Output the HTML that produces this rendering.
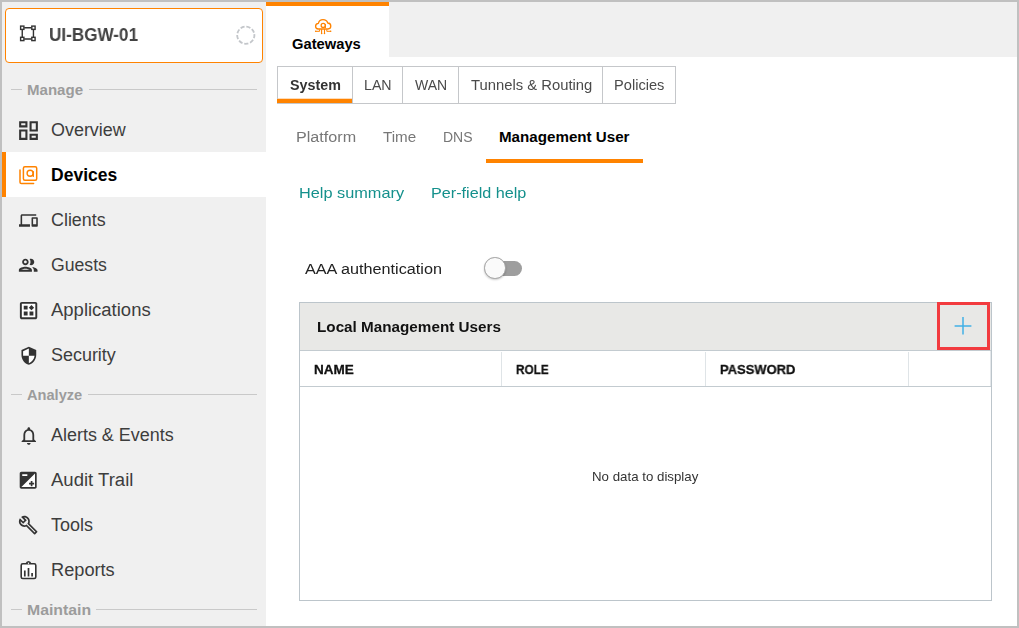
<!DOCTYPE html>
<html lang="en"><head><meta charset="utf-8"><title>Gateways - Management User</title>
<style>
html,body{margin:0;padding:0}
body{width:1019px;height:628px;position:relative;overflow:hidden;background:#fff;font-family:"Liberation Sans",sans-serif}
.a{position:absolute}
.t{position:absolute;transform-origin:0 0;white-space:nowrap;line-height:20px;font-family:"Liberation Sans",sans-serif}
#frame{left:0;top:0;width:1019px;height:628px;box-sizing:border-box;border:2px solid #c0c0c0;z-index:10}
#side{left:2px;top:2px;width:264px;height:624px;background:#f0f0f0}
#strip{left:266px;top:2px;width:751px;height:55px;background:#f0f0f0}
#gtab{left:266px;top:2px;width:123px;height:55px;background:#fff;box-sizing:border-box;border-top:4px solid #ff8300}
#card{left:5px;top:8px;width:258px;height:55px;box-sizing:border-box;border:1px solid #ff8300;border-radius:4px;background:#fff}
.hl{height:1px;background:#c9c9c9}
#selrow{left:2px;top:152px;width:264px;height:45px;background:#fff;box-sizing:border-box;border-left:4px solid #ff8300}
#subtabs{left:277px;top:66px;width:399px;height:38px;box-sizing:border-box;border:1px solid #c5c7ca;background:#fff}
.vd{top:67px;width:1px;height:36px;background:#c5c7ca}
#sysline{left:277px;top:99px;width:75px;height:4px;background:#ff8300}
#muline{left:486px;top:159px;width:157px;height:4px;background:#ff8300}
#track{left:486px;top:261px;width:36px;height:15px;border-radius:8px;background:#9e9e9e}
#knob{left:484px;top:257px;width:21.5px;height:21.5px;border-radius:50%;background:#fafafa;box-sizing:border-box;border:1px solid #a0a0a0;box-shadow:0 1px 2px rgba(0,0,0,.2)}
#table{left:299px;top:302px;width:693px;height:299px;box-sizing:border-box;border:1px solid #bcc5cb;background:#fff}
#thead{left:300px;top:303px;width:691px;height:47px;background:#e8e8e6}
.tl{left:300px;width:691px;height:1px;background:#c3cbd0}
.cd{top:352px;width:1px;height:34px;background:#dfe4e7}
#redbox{left:937px;top:302px;width:53px;height:48px;box-sizing:border-box;border:3px solid #f23b3f}

.hb{-webkit-text-stroke:0.3px currentColor}
.gs{will-change:transform}

</style></head>
<body>
<div class="a" id="side"></div>
<div class="a" id="strip"></div>
<div class="a" id="gtab"></div>
<div class="a" id="card"></div>
<div class="a hl" style="left:11px;top:89px;width:11px"></div>
<div class="a hl" style="left:89px;top:89px;width:168px"></div>
<div class="a hl" style="left:11px;top:394px;width:11px"></div>
<div class="a hl" style="left:88px;top:394px;width:169px"></div>
<div class="a hl" style="left:11px;top:609px;width:11px"></div>
<div class="a hl" style="left:96px;top:609px;width:161px"></div>
<div class="a" id="selrow"></div>
<div class="a" id="subtabs"></div>
<div class="a vd" style="left:352px"></div>
<div class="a vd" style="left:402px"></div>
<div class="a vd" style="left:458px"></div>
<div class="a vd" style="left:602px"></div>
<div class="a" id="sysline"></div>
<div class="a" style="left:278px;top:98px;width:74px;height:1px;background:#ff8300;opacity:.28"></div>
<div class="a" id="muline"></div>
<div class="a" id="track"></div>
<div class="a" id="knob"></div>
<div class="a" id="table"></div>
<div class="a" id="thead"></div>
<div class="a tl" style="top:350px"></div>
<div class="a tl" style="top:386px"></div>
<div class="a cd" style="left:501px"></div>
<div class="a cd" style="left:705px"></div>
<div class="a cd" style="left:908px"></div>
<div class="a cd" style="left:990px;top:351px;height:35px;background:#e3e7ea"></div>
<div class="a" id="redbox"></div>
<!--ICONS_START-->
<!-- device card icon -->
<svg class="a" style="left:18px;top:23px" width="20" height="20" viewBox="18 23 20 20" fill="none" stroke="#333" stroke-width="1.4">
<path d="M24.2 27.75H31.4M24.2 38.95H31.4M22.25 29.8V37M33.45 29.8V37"/>
<rect x="20.6" y="26.1" width="3.3" height="3.3" fill="#fff"/><rect x="31.8" y="26.1" width="3.3" height="3.3" fill="#fff"/>
<rect x="20.6" y="37.3" width="3.3" height="3.3" fill="#fff"/><rect x="31.8" y="37.3" width="3.3" height="3.3" fill="#fff"/>
</svg>
<!-- spinner -->
<svg class="a" style="left:234px;top:23px" width="24" height="24" viewBox="234 23 24 24" fill="none">
<circle cx="245.8" cy="35.2" r="8.6" stroke="#c3c6ca" stroke-width="1.8" stroke-dasharray="4.2 1.804" transform="rotate(-8 245.8 35.2)"/>
</svg>
<!-- gateways cloud -->
<svg class="a" style="left:312px;top:16px" width="22" height="20" viewBox="312 16 22 20" fill="none" stroke="#ff8300" stroke-width="1" stroke-linecap="round" stroke-linejoin="round">
<path stroke-width="1.3" d="M318.3 29C316.700 29 315.600 27.700 315.600 26.200C315.600 24.600 316.800 23.400 318.400 23.300C318.900 21.200 320.700 19.700 323 19.700C325.300 19.700 327.100 21 327.700 23C329.500 23.100 330.800 24.500 330.800 26.100C330.800 27.700 329.600 29 328 29Z"/>
<circle cx="323.200" cy="25.400" r="2.050" stroke-width="1.25"/>
<path d="M325.400 24.600V27.500" stroke-width="1.1"/>
<path d="M321.600 29.500V33.300M324.500 29.500V33.300" stroke-width="1.1"/>
<path d="M315.800 31.300H319.600V29.800M330.600 31.300H326.800V29.800" stroke-width="1"/>
<circle cx="321.600" cy="33.400" r=".75" fill="#ff8300" stroke="none"/><circle cx="324.500" cy="33.400" r=".75" fill="#ff8300" stroke="none"/>
<circle cx="315.700" cy="31.300" r=".75" fill="#ff8300" stroke="none"/><circle cx="330.700" cy="31.300" r=".75" fill="#ff8300" stroke="none"/>
</svg>
<!-- overview (dashboard outlined mirrored) -->
<svg class="a" style="left:16.1px;top:118px" width="25" height="25" viewBox="0 0 24 24" fill="#333"><g transform="translate(24 0) scale(-1 1)">
<path d="M19 5v2h-4V5h4M9 5v6H5V5h4m10 8v6h-4v-6h4M9 17v2H5v-2h4M21 3h-8v6h8V3zM11 3H3v10h8V3zm10 8h-8v10h8V11zm-10 4H3v6h8v-6z"/></g></svg>
<!-- devices (orange) -->
<svg class="a" style="left:17px;top:163px" width="24" height="24" viewBox="17 163 24 24" fill="none" stroke="#ff8300" stroke-width="1.5" stroke-linecap="round" stroke-linejoin="round">
<rect x="23.4" y="166.8" width="13.3" height="13.4" rx="1.5"/>
<path d="M20 170V182.2Q20 183.6 21.4 183.6H33.6"/>
<circle cx="30.1" cy="173.3" r="3" stroke-width="1.4"/>
<path d="M33.3 171.6V176.4" stroke-width="1.3"/>
</svg>
<!-- clients (devices) -->
<svg class="a" style="left:19.3px;top:210.7px" width="18.8" height="18.8" viewBox="0 0 24 24" fill="#333">
<path d="M4 6h18V4H4c-1.1 0-2 .9-2 2v11H0v3h14v-3H4V6zm19 2h-6c-.55 0-1 .45-1 1v10c0 .55.45 1 1 1h6c.55 0 1-.45 1-1V9c0-.55-.45-1-1-1zm-1 9h-4v-7h4v7z"/></svg>
<!-- guests (people outlined) -->
<svg class="a" style="left:17.4px;top:254.4px" width="22.4" height="22.4" viewBox="0 0 24 24" fill="#333">
<path d="M9 13.75c-2.34 0-7 1.17-7 3.5V19h14v-1.75c0-2.33-4.66-3.5-7-3.5zM4.340 17c.84-.58 2.870-1.250 4.660-1.250s3.820.67 4.660 1.250H4.340zM9 12c1.930 0 3.500-1.570 3.500-3.500S10.930 5 9 5 5.500 6.570 5.500 8.500 7.070 12 9 12zm0-5c.83 0 1.500.67 1.500 1.500S9.830 10 9 10s-1.500-.67-1.500-1.500S8.170 7 9 7zm7.040 6.810c1.160.84 1.960 1.960 1.960 3.440V19h4v-1.750c0-2.020-3.500-3.170-5.960-3.440zM15 12c1.930 0 3.500-1.570 3.500-3.500S16.930 5 15 5c-.54 0-1.040.13-1.500.35.63.89 1 1.980 1 3.150s-.37 2.260-1 3.150c.46.220.96.350 1.500.350z"/></svg>
<!-- applications (dataset) -->
<svg class="a" style="left:16.95px;top:298.9px" width="23.15" height="23.15" viewBox="0 0 24 24" fill="#333">
<rect x="4" y="4" width="16" height="16" fill="#fff"/>
<path fill-rule="evenodd" d="M7 17h4v-4H7v4Zm6 0h4v-4h-4v4ZM7 11h4V7H7v4Zm8 .75 2.750-2.750L15 6.250 12.250 9 15 11.750ZM5 21q-.825 0-1.413-.587Q3 19.825 3 19V5q0-.825.587-1.413Q4.175 3 5 3h14q.825 0 1.413.587Q21 4.175 21 5v14q0 .825-.587 1.413Q19.825 21 19 21Zm0-2h14V5H5v14Z"/></svg>
<!-- security -->
<svg class="a" style="left:18.7px;top:345.8px" width="19.7" height="19.7" viewBox="0 0 24 24" fill="#333">
<path d="M12 2.2L4 5.700v5.300c0 5 3.400 9.700 8 10.900 4.600-1.200 8-5.900 8-10.900V5.700z" fill="#fff"/>
<path d="M12 1L3 5v6c0 5.550 3.840 10.740 9 12 5.160-1.260 9-6.450 9-12V5l-9-4zm0 10.990h7c-.53 4.120-3.280 7.790-7 8.940V12H5V6.300l7-3.110v8.800z"/></svg>
<!-- alerts bell -->
<svg class="a" style="left:17.9px;top:424.8px" width="21.6" height="21.6" viewBox="0 0 24 24" fill="#333">
<path d="M12 22c1.100 0 2-.9 2-2h-4c0 1.100.9 2 2 2zm6-6v-5c0-3.070-1.630-5.640-4.500-6.320V4c0-.83-.67-1.500-1.500-1.500s-1.500.67-1.500 1.500v.68C7.640 5.360 6 7.920 6 11v5l-2 2v1h16v-1l-2-2zm-2 1H8v-6c0-2.480 1.510-4.500 4-4.500s4 2.020 4 4.500v6z"/></svg>
<!-- audit trail (exposure) -->
<svg class="a" style="left:18.3px;top:470.2px" width="20.4" height="20.4" viewBox="0 0 24 24" fill="#333">
<rect x="3" y="3" width="18" height="18" rx="1" fill="#fff"/>
<path fill-rule="evenodd" d="M15 17v2h2v-2h2v-2h-2v-2h-2v2h-2v2h2zM20 2H4c-1.100 0-2 .9-2 2v16c0 1.100.9 2 2 2h16c1.100 0 2-.9 2-2V4c0-1.100-.9-2-2-2zM5 5h6v2H5V5zm15 15H4L20 4v16z"/></svg>
<!-- tools (build outlined) -->
<svg class="a" style="left:18.1px;top:515.1px" width="20.4" height="20.4" viewBox="0 0 24 24" fill="#333">
<path d="M22.610 18.990l-9.080-9.080c.93-2.340.45-5.100-1.440-7C9.790.61 6.210.4 3.660 2.260L7.500 6.110 6.080 7.520 2.250 3.690C.39 6.230.6 9.820 2.900 12.110c1.860 1.860 4.570 2.350 6.890 1.480l9.110 9.110c.39.39 1.020.39 1.410 0l2.300-2.300c.4-.38.4-1.010 0-1.410zm-3 1.600l-9.460-9.460c-.61.45-1.290.72-2 .82-1.360.2-2.790-.21-3.830-1.250C3.370 9.760 2.930 8.500 3 7.260l3.090 3.090 4.240-4.240-3.090-3.090c1.240-.07 2.490.37 3.440 1.310 1.080 1.080 1.490 2.570 1.240 3.960-.12.710-.42 1.370-.88 1.960l9.450 9.450-.88.890z"/></svg>
<!-- reports -->
<svg class="a" style="left:18px;top:559px" width="22" height="22" viewBox="18 559 22 22" fill="none" stroke="#333" stroke-width="1.6" stroke-linejoin="round">
<path d="M26.2 563.8C26.6 562.4 27.500 561.700 28.500 561.700C29.500 561.700 30.400 562.400 30.800 563.800" stroke-width="1.4"/>
<rect x="21.200" y="563.800" width="14.600" height="14.700" rx="1.600" fill="#fff"/>
<path d="M24.800 570.600V576.500M28.500 567.900V576.500M32.100 573V576.500" stroke-width="1.700"/>
<circle cx="28.500" cy="563.600" r=".7" fill="#fff" stroke="none"/>
</svg>
<!-- plus -->
<svg class="a" style="left:952px;top:315px" width="22" height="22" viewBox="952 315 22 22" fill="none" stroke="#41b0e6" stroke-width="1.5">
<path d="M954.600 326H971.400M963 317V334.500"/></svg>
<!--ICONS_END-->
<div class="a" id="frame"></div>

<nav aria-label="Sidebar">
<span id="t_dev" class="t gs" style="left:49.15px;top:24.80px;font-size:18px;font-weight:700;color:#424242;transform:scaleX(0.9511)">UI-BGW-01</span>
<span id="t_manage" class="t" style="left:27.06px;top:80.00px;font-size:14px;font-weight:700;color:#9c9c9c;transform:scaleX(1.0757)">Manage</span>
<span id="t_overview" class="t" style="left:51.20px;top:119.50px;font-size:18px;font-weight:400;color:#3d3d3d;transform:scaleX(0.9964)">Overview</span>
<span id="t_devices" class="t" style="left:51.13px;top:164.50px;font-size:18px;font-weight:700;color:#000;transform:scaleX(0.9731)">Devices</span>
<span id="t_clients" class="t" style="left:51.30px;top:209.50px;font-size:18px;font-weight:400;color:#3d3d3d;transform:scaleX(0.9929)">Clients</span>
<span id="t_guests" class="t" style="left:51.30px;top:254.50px;font-size:18px;font-weight:400;color:#3d3d3d;transform:scaleX(0.9801)">Guests</span>
<span id="t_apps" class="t" style="left:51.20px;top:299.50px;font-size:18px;font-weight:400;color:#3d3d3d;transform:scaleX(1.0267)">Applications</span>
<span id="t_sec" class="t" style="left:51.00px;top:344.50px;font-size:18px;font-weight:400;color:#3d3d3d;transform:scaleX(0.9966)">Security</span>
<span id="t_analyze" class="t" style="left:27.22px;top:385.00px;font-size:14px;font-weight:700;color:#9c9c9c;transform:scaleX(1.0443)">Analyze</span>
<span id="t_alerts" class="t" style="left:51.00px;top:424.50px;font-size:18px;font-weight:400;color:#3d3d3d;transform:scaleX(0.9970)">Alerts &amp; Events</span>
<span id="t_audit" class="t" style="left:51.00px;top:469.50px;font-size:18px;font-weight:400;color:#3d3d3d;transform:scaleX(1.0292)">Audit Trail</span>
<span id="t_tools" class="t" style="left:50.69px;top:514.50px;font-size:18px;font-weight:400;color:#3d3d3d;transform:scaleX(0.9997)">Tools</span>
<span id="t_reports" class="t" style="left:50.81px;top:559.50px;font-size:18px;font-weight:400;color:#3d3d3d;transform:scaleX(1.0110)">Reports</span>
<span id="t_maintain" class="t" style="left:26.82px;top:600.00px;font-size:14px;font-weight:700;color:#9c9c9c;transform:scaleX(1.1292)">Maintain</span>
</nav>
<main>
<span id="t_gw" class="t" style="left:291.88px;top:35.30px;font-size:13.8px;font-weight:700;color:#000;transform:scaleX(1.0678)">Gateways</span>
<span id="t_system" class="t gs" style="left:289.82px;top:75.00px;font-size:14px;font-weight:700;color:#333;transform:scaleX(1.0207)">System</span>
<span id="t_lan" class="t gs" style="left:364.01px;top:75.00px;font-size:14px;font-weight:400;color:#4a4a4a;transform:scaleX(1.0146)">LAN</span>
<span id="t_wan" class="t gs" style="left:414.69px;top:75.00px;font-size:14px;font-weight:400;color:#4a4a4a;transform:scaleX(0.9864)">WAN</span>
<span id="t_tun" class="t gs" style="left:470.82px;top:75.00px;font-size:14px;font-weight:400;color:#4a4a4a;transform:scaleX(1.0575)">Tunnels &amp; Routing</span>
<span id="t_pol" class="t gs" style="left:613.98px;top:75.00px;font-size:14px;font-weight:400;color:#4a4a4a;transform:scaleX(1.0444)">Policies</span>
<span id="t_plat" class="t gs" style="left:295.87px;top:126.70px;font-size:14px;font-weight:400;color:#777;transform:scaleX(1.1529)">Platform</span>
<span id="t_time" class="t gs" style="left:383.10px;top:126.70px;font-size:14px;font-weight:400;color:#777;transform:scaleX(1.0852)">Time</span>
<span id="t_dns" class="t gs" style="left:442.82px;top:126.70px;font-size:14px;font-weight:400;color:#777;transform:scaleX(0.9950)">DNS</span>
<span id="t_mu" class="t" style="left:499.20px;top:126.90px;font-size:14px;font-weight:700;color:#000;transform:scaleX(1.0823)">Management User</span>
<span id="t_help" class="t gs" style="left:299.01px;top:182.60px;font-size:15px;font-weight:400;color:#14908c;transform:scaleX(1.0866)">Help summary</span>
<span id="t_pfh" class="t gs" style="left:430.62px;top:182.60px;font-size:15px;font-weight:400;color:#14908c;transform:scaleX(1.0788)">Per-field help</span>
<span id="t_aaa" class="t gs" style="left:304.69px;top:259.10px;font-size:14px;font-weight:400;color:#222;transform:scaleX(1.1575)">AAA authentication</span>
<span id="t_lmu" class="t gs" style="left:317.40px;top:317.00px;font-size:14px;font-weight:700;color:#111;transform:scaleX(1.0892)">Local Management Users</span>
<span id="t_name" class="t hb gs" style="left:313.69px;top:360.10px;font-size:13.5px;font-weight:700;color:#111;transform:scaleX(1.0017)">NAME</span>
<span id="t_role" class="t hb gs" style="left:516.20px;top:360.10px;font-size:13.5px;font-weight:700;color:#111;transform:scaleX(0.8721)">ROLE</span>
<span id="t_pw" class="t hb gs" style="left:719.88px;top:360.10px;font-size:13.5px;font-weight:700;color:#111;transform:scaleX(0.9602)">PASSWORD</span>
<span id="t_nodata" class="t gs" style="left:591.65px;top:467.00px;font-size:12.7px;font-weight:400;color:#333;transform:scaleX(1.0472)">No data to display</span>
</main>
</body></html>
